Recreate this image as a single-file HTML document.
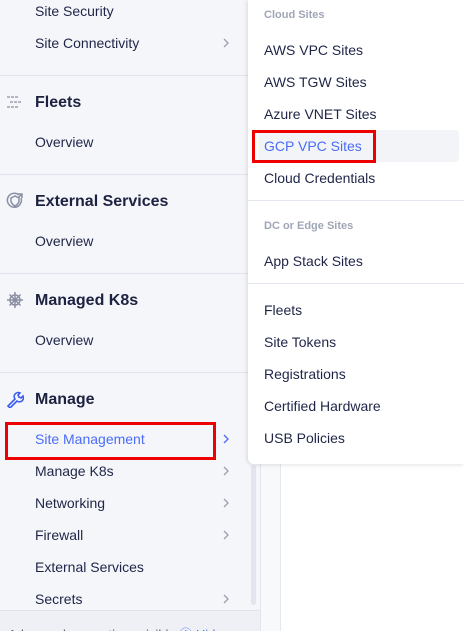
<!DOCTYPE html>
<html><head><meta charset="utf-8"><style>
*{margin:0;padding:0;box-sizing:border-box}
body{width:464px;height:631px;overflow:hidden;position:relative;background:#fff;font-family:"Liberation Sans",sans-serif;color:#1f2547}
.side{position:absolute;left:0;top:0;width:261px;height:631px;background:#f5f6fa;border-right:1px solid #e3e5ef}
.main{position:absolute;left:261px;top:0;width:20px;height:631px;background:#f8f9fb;border-right:1px solid #e6e8ef}
.t{position:absolute;white-space:nowrap;transform:translateY(-50%)}
.i{left:35px;font-size:14px}
.h{left:35px;font-size:16px;font-weight:bold;color:#1c2240;margin-top:1px}
.hr{position:absolute;left:0;width:248px;height:1px;background:#e1e3ee}
.ch{position:absolute;left:223px;width:6px;height:10px;margin-top:-5px}
.pop{position:absolute;left:248px;top:0;width:216px;height:464px;background:#fff;border-bottom-left-radius:6px;box-shadow:-1px 1px 4px rgba(0,0,0,.12)}
.p{left:16px;font-size:14px}
.l{left:16px;font-size:11px;font-weight:bold;color:#a0a6b6}
.phr{position:absolute;left:0;width:216px;height:1px;background:#e4e6ef}
.red{position:absolute;border:3px solid #ee0000}
.icon{position:absolute;left:6px}
</style></head><body>
<div class="side">
<div class="t i" style="top:11px">Site Security</div>
<div class="t i" style="top:43px">Site Connectivity</div><svg class="ch" style="top:43px" viewBox="0 0 6 10" fill="none" stroke="#9aa0b0" stroke-width="1.3"><path d="M1 1l4 4-4 4"/></svg>
<div class="hr" style="top:75px"></div>
<svg class="icon" style="top:95px" width="18" height="14" viewBox="0 0 18 14" fill="none" stroke="#8a90a4" stroke-width="1.2"><path d="M1 2h3M5 2h3M9 2h3M4 7h3M8 7h3M12 7h3M1 12h3M5 12h3M9 12h3"/></svg>
<div class="t h" style="top:102px">Fleets</div>
<div class="t i" style="top:142px">Overview</div>
<div class="hr" style="top:174px"></div>
<svg class="icon" style="top:192px" width="18" height="18" viewBox="0 0 18 18" fill="none" stroke="#8a90a4" stroke-width="1.5"><path d="M13 3A7 7 0 1 0 15 6"/><path d="M5 6l4-2 4 2v3c0 3-4 5-4 5s-4-2-4-5z"/><path d="M12 2h4v4M16 2l-4 4"/></svg>
<div class="t h" style="top:201px">External Services</div>
<div class="t i" style="top:241px">Overview</div>
<div class="hr" style="top:273px"></div>
<svg class="icon" style="top:291px" width="18" height="18" viewBox="0 0 18 18" fill="none" stroke="#8a90a4" stroke-width="1.5"><circle cx="9" cy="9" r="5"/><circle cx="9" cy="9" r="1.5"/><path d="M9 1v16M1 9h16M3.5 3.5l11 11M14.5 3.5l-11 11"/></svg>
<div class="t h" style="top:300px">Managed K8s</div>
<div class="t i" style="top:340px">Overview</div>
<div class="hr" style="top:372px"></div>
<svg class="icon" style="top:390px" width="18" height="18" viewBox="0 0 18 18" fill="none" stroke="#3b5cf0" stroke-width="1.6"><path d="M2 16l7-7a4 4 0 0 1 5-6l-2 2 1 2 2 1 2-2a4 4 0 0 1-6 5l-7 7z"/></svg>
<div class="t h" style="top:399px">Manage</div>
<div class="t i" style="top:439px;color:#4a6cf7">Site Management</div><svg class="ch" style="top:439px" viewBox="0 0 6 10" fill="none" stroke="#4a6cf7" stroke-width="1.3"><path d="M1 1l4 4-4 4"/></svg>
<div class="t i" style="top:471px">Manage K8s</div><svg class="ch" style="top:471px" viewBox="0 0 6 10" fill="none" stroke="#9aa0b0" stroke-width="1.3"><path d="M1 1l4 4-4 4"/></svg>
<div class="t i" style="top:503px">Networking</div><svg class="ch" style="top:503px" viewBox="0 0 6 10" fill="none" stroke="#9aa0b0" stroke-width="1.3"><path d="M1 1l4 4-4 4"/></svg>
<div class="t i" style="top:535px">Firewall</div><svg class="ch" style="top:535px" viewBox="0 0 6 10" fill="none" stroke="#9aa0b0" stroke-width="1.3"><path d="M1 1l4 4-4 4"/></svg>
<div class="t i" style="top:567px">External Services</div>
<div class="t i" style="top:599px">Secrets</div><svg class="ch" style="top:599px" viewBox="0 0 6 10" fill="none" stroke="#9aa0b0" stroke-width="1.3"><path d="M1 1l4 4-4 4"/></svg>
<div style="position:absolute;left:251px;top:465px;width:5px;height:140px;background:#e3e5ee;border-radius:3px"></div>
<div style="position:absolute;left:0;top:610px;width:260px;height:21px;background:#eef0f6;border-top:1px solid #e1e3ee;overflow:hidden"><div style="position:absolute;left:8px;top:13px;font-size:13px;color:#555b70;white-space:nowrap">Advanced nav options visible <span style="color:#4a6cf7">&#9432; Hide</span></div></div>
</div>
<div class="main"></div>
<div class="red" style="left:5px;top:422px;width:211px;height:38px"></div>
<div class="pop">
<div class="t l" style="top:15px">Cloud Sites</div>
<div class="t p" style="top:50px">AWS VPC Sites</div>
<div class="t p" style="top:82px">AWS TGW Sites</div>
<div class="t p" style="top:114px">Azure VNET Sites</div>
<div style="position:absolute;left:10px;top:130px;width:201px;height:32px;background:#f3f4f8;border-radius:4px"></div>
<div class="t p" style="top:146px;color:#4a6cf7">GCP VPC Sites</div>
<div class="t p" style="top:178px">Cloud Credentials</div>
<div class="phr" style="top:200px"></div>
<div class="t l" style="top:226px">DC or Edge Sites</div>
<div class="t p" style="top:261px">App Stack Sites</div>
<div class="phr" style="top:283px"></div>
<div class="t p" style="top:310px">Fleets</div>
<div class="t p" style="top:342px">Site Tokens</div>
<div class="t p" style="top:374px">Registrations</div>
<div class="t p" style="top:406px">Certified Hardware</div>
<div class="t p" style="top:438px">USB Policies</div>
</div>
<div class="red" style="left:252px;top:130px;width:124px;height:33px"></div>
</body></html>
